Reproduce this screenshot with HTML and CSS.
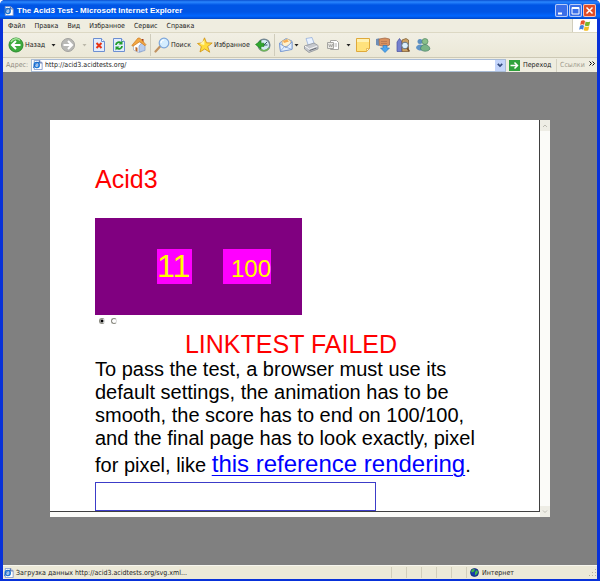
FILE: index.html
```html
<!DOCTYPE html>
<html lang="ru">

    <head>
        <meta charset="UTF-8">
        <meta name="viewport" content="width=device-width, initial-scale=1.0">
        <title>The Acid3 Test</title>

        <link rel="stylesheet" href="styles.css">
    </head>

    <body>
        <!-- shared icons -->
        <svg class="defs" aria-hidden="true">
            <symbol id="iePage" viewBox="0 0 12 12">
                <path d="M1.500.5h6.500l3 3v8h-9.500z" fill="#fff" stroke="#7b93c8" />
                <path d="M8 .5v3h3" fill="#dce6f8" stroke="#445a96" />
                <circle cx="4.500" cy="6" r="3" fill="none" stroke="#1d78d8" stroke-width="1.800" />
                <path d="M2 6h5M.5 9.500C1 6 5 2 8.500 2.500" fill="none" stroke="#1b62c4" stroke-width="1" />
            </symbol>
            <symbol id="down" viewBox="0 0 5 3">
                <path d="M.5 0h4l-2 2.500z" fill="currentColor" />
            </symbol>
        </svg>

        <div class="window">
            <header class="title-bar">
                <svg class="icon-small"><use href="#iePage" /></svg>
                <h1>The Acid3 Test - Microsoft Internet Explorer</h1>
                <div class="window-buttons">
                    <button type="button" aria-label="Minimize"><svg viewBox="0 0 13 13"><path d="M3 9.500h4" stroke="#fff" stroke-width="2" /></svg></button>
                    <button type="button" aria-label="Maximize"><svg viewBox="0 0 13 13"><path d="M3 3.500h7v6.500h-7zM3 4.500h7" fill="none" stroke="#fff" /></svg></button>
                    <button type="button" class="close" aria-label="Close"><svg viewBox="0 0 13 13"><path d="M3.500 3.500l6 6M9.500 3.500l-6 6" stroke="#fff" stroke-width="1.500" /></svg></button>
                </div>
            </header>

            <nav class="menu-bar">
                <button type="button">Файл</button>
                <button type="button">Правка</button>
                <button type="button">Вид</button>
                <button type="button">Избранное</button>
                <button type="button">Сервис</button>
                <button type="button">Справка</button>
                <div class="flag">
                    <svg viewBox="0 0 12 12">
                        <path d="M2 1.500c1.500-1 3-.8 4 0l-.8 4c-1-.8-2.500-1-4 0z" fill="#e8542c" />
                        <path d="M6.600 2c1.500.8 3 .8 4.600 0l-.9 4c-1.500.8-3 .8-4.500 0z" fill="#7ab52c" />
                        <path d="M1 6.200c1.500-1 3-.8 4 0l-.9 4c-1-.8-2.500-1-4 0z" fill="#3f7fe0" />
                        <path d="M5.600 6.700c1.500.8 3 .8 4.600 0l-.9 4c-1.500.8-3 .8-4.500 0z" fill="#f5bd22" />
                    </svg>
                </div>
            </nav>

            <div class="toolbar">
                <button type="button" class="back">
                    <svg class="icon" viewBox="0 0 16 16">
                        <circle cx="8" cy="8" r="7" fill="#3cab3c" stroke="#2b8b2d" />
                        <path d="M3 5c1-3 6-4.500 9-1.500" fill="none" stroke="#a6e59c" stroke-width="1.500" />
                        <path d="M12.500 8H4.500M8 4L4 8l4 4" fill="none" stroke="#fff" stroke-width="2" />
                    </svg>
                    <span>Назад</span>
                    <svg class="arrow"><use href="#down" /></svg>
                </button>
                <button type="button" class="forward" aria-label="Вперед" disabled>
                    <svg class="icon" viewBox="0 0 16 16">
                        <circle cx="8" cy="8" r="6.500" fill="#b9b9b6" stroke="#a2a29f" />
                        <path d="M3.500 8h8M8 4l4 4-4 4" fill="none" stroke="#fff" stroke-width="2" />
                    </svg>
                    <svg class="arrow"><use href="#down" /></svg>
                </button>
                <button type="button" aria-label="Остановить">
                    <svg class="icon" viewBox="0 0 16 16">
                        <path d="M2.500 1.500h8l3 3v10h-11z" fill="#e3edfd" stroke="#6c8fd2" />
                        <path d="M10.500 1.500v3h3" fill="#fff" stroke="#6c8fd2" />
                        <path d="M5.500 6l5 5M10.500 6l-5 5" stroke="#e83414" stroke-width="2" />
                    </svg>
                </button>
                <button type="button" aria-label="Обновить">
                    <svg class="icon" viewBox="0 0 16 16">
                        <path d="M2.500 1.500h8l3 3v10h-11z" fill="#e3edfd" stroke="#6c8fd2" />
                        <path d="M10.500 1.500v3h3" fill="#fff" stroke="#6c8fd2" />
                        <path d="M5 8c0-3 3.500-3.500 5-2M11 9c0 3-3.500 3.500-5 2" fill="none" stroke="#219c2a" stroke-width="1.800" />
                        <path d="M11.500 3.500v4h-4zM4.500 13.500v-4h4z" fill="#219c2a" />
                    </svg>
                </button>
                <button type="button" aria-label="Домой">
                    <svg class="icon" viewBox="0 0 16 16">
                        <path d="M10.500 2h2v4h-2z" fill="#a33f21" />
                        <path d="M2.500 8l3.500-4 5 2v8.500l-3.500 1-5-2.500z" fill="#fff" stroke="#9cabc6" stroke-width=".7" />
                        <path d="M8 9l3.500-4 2.500 3v5.500L8 15z" fill="#b8cdee" stroke="#7e9bcb" stroke-width=".7" />
                        <path d="M.8 8.500L7 1l2 .2 6 6.500-1 1-5.300-4L2 9.200z" fill="#f2a844" stroke="#cf7a21" stroke-width=".7" />
                        <path d="M4.500 10l2 .8v4l-2-1z" fill="#b96829" />
                    </svg>
                </button>
                <span class="separator"></span>
                <button type="button" class="search">
                    <svg class="icon" viewBox="0 0 16 16">
                        <path d="M1.500 14.500l5-5.500" stroke="#c19261" stroke-width="2.200" stroke-linecap="round" />
                        <circle cx="10" cy="6" r="4.800" fill="#d4edff" stroke="#7da6da" stroke-width="1.200" />
                        <path d="M7 6c0-2 1.500-3 3-3" fill="none" stroke="#fff" stroke-width="1.200" />
                    </svg>
                    <span>Поиск</span>
                </button>
                <button type="button" class="favorites">
                    <svg class="icon" viewBox="0 0 16 16">
                        <path d="M7.500.8l2 5 5.700.2-4.500 3.500 2 5.700-5-3.200L3 15l1.300-5.500L.5 6.500l5-.7z" fill="#ffdc3c" stroke="#cf9014" stroke-width=".8" />
                        <path d="M7.300 3v5L3 7z" fill="#fff6ae" />
                    </svg>
                    <span>Избранное</span>
                </button>
                <button type="button" aria-label="Журнал">
                    <svg class="icon" viewBox="0 0 16 16">
                        <circle cx="9" cy="8" r="5.800" fill="#d4ecf2" stroke="#748894" stroke-width="1.500" />
                        <path d="M9 8l3-3M9 8h3.500" stroke="#34576b" />
                        <path d="M14 11c-3 4-8.500 3.500-9.500-1" fill="none" stroke="#70b45a" stroke-width="1.500" />
                        <path d="M.5 7.500L6 3.500v2.700h3v3.200H6V12z" fill="#30a72e" stroke="#1e7c20" stroke-width=".6" />
                    </svg>
                </button>
                <span class="separator"></span>
                <button type="button" class="mail" aria-label="Почта">
                    <svg class="icon" viewBox="0 0 16 16">
                        <path d="M1.500 6L8 1.500 14 4v8L2.500 14.500z" fill="#c2dcfa" stroke="#7496ce" stroke-width=".8" />
                        <path d="M4 4l6-2 3 2.500-1 4-7 1.500z" fill="#fff2cf" stroke="#daa65a" stroke-width=".6" />
                        <path d="M5 4l4-1.500 2 2L6 6z" fill="#f6ae55" />
                        <path d="M1.500 6.500l6.500 4L14 5v7.500L2.500 14.500z" fill="#e3f0ff" stroke="#6e92ce" stroke-width=".8" />
                        <path d="M2.500 14l4-4.500 7.500 3" fill="none" stroke="#7f9fd5" stroke-width=".7" />
                    </svg>
                    <svg class="arrow"><use href="#down" /></svg>
                </button>
                <button type="button" aria-label="Печать">
                    <svg class="icon" viewBox="0 0 16 16">
                        <path d="M3 1.500l6-1 2.500 7-6 1.500z" fill="#eaf3ff" stroke="#8ba8d8" stroke-width=".7" />
                        <path d="M1.500 9l9.500-3 4 2.500v3.500L6 15.500 1.500 12z" fill="#c5c8cd" stroke="#84888f" stroke-width=".7" />
                        <path d="M2 9.200l4.500 2.800 8-3" fill="none" stroke="#f6f6f6" />
                        <path d="M6.500 13.500l7-2.500" stroke="#63676e" />
                    </svg>
                </button>
                <button type="button" class="word" aria-label="Правка в Word">
                    <svg class="icon" viewBox="0 0 16 16">
                        <path d="M5.500 3.500h6l2 2v7h-8z" fill="#fff" stroke="#a6a6a2" />
                        <path d="M2.500 5.500h6v6h-6z" fill="#ecebe6" stroke="#a6a6a2" />
                        <path d="M3.700 7l1 3 1-2.500 1 2.500 1-3M9.500 7h2.500M9.500 9h2.500" fill="none" stroke="#9b9b98" stroke-width=".8" />
                    </svg>
                    <svg class="arrow"><use href="#down" /></svg>
                </button>
                <button type="button" aria-label="Заметки">
                    <svg class="icon" viewBox="0 0 16 16">
                        <path d="M1.500 1.500h13v10l-3 3h-10z" fill="#ffe27c" stroke="#dfa93a" />
                        <path d="M2 2h12v3H2z" fill="#fff2b4" />
                        <path d="M14.500 11.500h-3v3z" fill="#fff7d4" stroke="#dfa93a" stroke-width=".7" />
                    </svg>
                </button>
                <button type="button" aria-label="Загрузить">
                    <svg class="icon" viewBox="0 0 16 16">
                        <path d="M1 2l3-.8V9L1 8z" fill="#6e8fb8" />
                        <path d="M4 2l6-1 4.500 1v6L11 9.500 4.500 8.500z" fill="#d9925f" stroke="#9b6040" stroke-width=".7" />
                        <path d="M6 4.500h6M6 6.500h6" stroke="#a86b49" stroke-width=".6" />
                        <path d="M8 8.500h4v2.500h2.500L10 15.500 5.500 11H8z" fill="#4ca4ed" stroke="#2572be" stroke-width=".6" />
                    </svg>
                </button>
                <button type="button" aria-label="Справочные материалы">
                    <svg class="icon" viewBox="0 0 16 16">
                        <path d="M2 5l2.500-3.500L7 5v9.500H2z" fill="#7581cf" stroke="#474f9e" stroke-width=".7" />
                        <path d="M7 3l4-1.500 2.500 1.500v11.500H7z" fill="#cda263" stroke="#76552e" stroke-width=".7" />
                        <circle cx="10" cy="8.500" r="3.300" fill="#dbeffc" stroke="#64788a" />
                        <path d="M12 11l2.500 3.500" stroke="#77512f" stroke-width="1.500" />
                    </svg>
                </button>
                <button type="button" aria-label="Messenger">
                    <svg class="icon" viewBox="0 0 16 16">
                        <circle cx="5" cy="4.500" r="2.500" fill="#5d8fc0" />
                        <path d="M1 11c0-4 7-5 8-1l-1 3c-2 1-5 1-7-2z" fill="#5e93c7" />
                        <circle cx="10" cy="4.500" r="3" fill="#8abf8a" stroke="#487e59" stroke-width=".6" />
                        <path d="M5.500 12c0-6 8.500-6 9.500 0-2 3-7.500 3-9.500 0z" fill="#79b486" stroke="#3e7660" stroke-width=".6" />
                    </svg>
                </button>
            </div>

            <form class="address-bar">
                <label for="address">Адрес:</label>
                <div class="address-field">
                    <svg class="icon-small"><use href="#iePage" /></svg>
                    <input type="text" id="address" name="address" value="http://acid3.acidtests.org/">
                    <button type="button" class="drop" aria-label="Список адресов">
                        <svg viewBox="0 0 9 9"><path d="M2.500 3.500l2 2 2-2" fill="none" stroke="#32497c" stroke-width="1.500" /></svg>
                    </button>
                </div>
                <button type="button" class="go">
                    <svg viewBox="0 0 11 11">
                        <path d="M0 0h11v11H0z" fill="#30a23d" />
                        <path d="M1.500 5.500h7M5.500 2.500l3 3-3 3" fill="none" stroke="#fff" stroke-width="1.500" />
                    </svg>
                    <span>Переход</span>
                </button>
                <button type="button" class="links">Ссылки</button>
                <svg class="chevrons" viewBox="0 0 6 5"><path d="M.5.5l2 2-2 2M3.500.5l2 2-2 2" fill="none" stroke="#000" /></svg>
            </form>

            <main class="viewport">
                <div class="frame">
                    <article class="page">
                        <h2>Acid3</h2>
                        <div class="score">
                            <span class="result">11</span>
                            <span class="total">100</span>
                        </div>
                        <div class="radios">
                            <input type="radio" name="bucket" aria-label="1" checked>
                            <input type="radio" name="bucket" aria-label="2">
                        </div>
                        <p class="linktest">LINKTEST FAILED</p>
                        <p class="instructions">To pass the test, a browser must use its default settings, the animation has to be smooth, the score has to end on 100/100, and the final page has to look exactly, pixel for pixel, like <a href="#">this reference rendering</a>.</p>
                        <div class="box"></div>
                    </article>
                    <div class="scrollbar">
                        <svg viewBox="0 0 10 11"><path d="M0 0h10v11H0z" fill="#eeede5" /><path d="M3 7l2-2 2 2" fill="none" stroke="#bdbcb3" /></svg>
                        <svg viewBox="0 0 10 11"><path d="M0 0h10v11H0z" fill="#eeede5" /><path d="M3 4.500l2 2 2-2" fill="none" stroke="#bdbcb3" /></svg>
                    </div>
                </div>
            </main>

            <footer class="status-bar">
                <svg class="icon-small"><use href="#iePage" /></svg>
                <span class="message">Загрузка данных http://acid3.acidtests.org/svg.xml...</span>
                <span class="panel"></span>
                <span class="panel"></span>
                <span class="panel"></span>
                <span class="panel"></span>
                <span class="panel"></span>
                <div class="zone">
                    <svg viewBox="0 0 9 9">
                        <circle cx="4.500" cy="4.500" r="4" fill="#173caa" stroke="#0c2266" stroke-width=".7" />
                        <path d="M1 3l2-2 2 .5-1 2-2 1zM5 4l2-2 1 2-1 2-2 1.500z" fill="#45b944" />
                    </svg>
                    <span>Интернет</span>
                </div>
                <svg class="grip" viewBox="0 0 9 9"><path d="M7 1h1v1H7zM7 4h1v1H7zM4 4h1v1H4zM7 7h1v1H7zM4 7h1v1H4zM1 7h1v1H1z" fill="#b5b19e" /></svg>
            </footer>
        </div>
    </body>

</html>
```

FILE: styles.css
```css
* {
    box-sizing: border-box;
}

body {
    margin: 0;
    background-color: #fff;
    font-family: "DejaVu Sans Condensed", "DejaVu Sans", sans-serif;
    font-size: 7px;
    line-height: 10px;
    color: #222;
}

svg {
    display: block;
    flex: none;
}

button {
    display: flex;
    align-items: center;
    padding: 0;
    border: none;
    background: none;
    font: inherit;
    color: inherit;
    white-space: nowrap;
}

.defs {
    display: none;
}

.window {
    display: flex;
    flex-direction: column;
    min-height: 100vh;
    padding: 0 3px 3px;
    background-color: #0831d9;
    border-radius: 5px 5px 0 0;
    overflow: hidden;
}

.icon-small {
    width: 10px;
    height: 10px;
}

.icon {
    width: 16px;
    height: 16px;
}

.arrow {
    width: 5px;
    height: 3px;
    margin-left: auto;
}

/* title */
.title-bar {
    display: flex;
    align-items: center;
    gap: 3px;
    height: 19px;
    margin: 0 -3px;
    padding: 2px 4px 0;
    background: linear-gradient(#0a4fd0, #2a87ff 2px, #0055e5 5px, #0055e5 12px, #0066ff 16px, #0046c8);
}

.title-bar h1 {
    flex: 1;
    margin: 0;
    font-family: "Liberation Sans", Arial, sans-serif;
    font-size: 8px;
    font-weight: bold;
    color: #fff;
    white-space: nowrap;
}

.window-buttons {
    display: flex;
    gap: 1px;
}

.window-buttons button {
    width: 13px;
    height: 13px;
    border-radius: 2px;
    background-color: #3a6ee8;
    box-shadow: inset 0 0 0 1px #b9cdf8;
}

.window-buttons svg {
    width: 13px;
    height: 13px;
}

.window-buttons .close {
    background-color: #e04d28;
    box-shadow: inset 0 0 0 1px #f3c6bc;
}

/* menu */
.menu-bar {
    display: flex;
    align-items: center;
    gap: 9px;
    height: 14px;
    padding-left: 5px;
    background-color: #efede0;
    border-bottom: 1px solid #dcd8c4;
}

.flag {
    align-self: stretch;
    margin-left: auto;
    padding: 0 6px;
    background-color: #fff;
    border-left: 1px solid #d0cdbd;
}

.flag svg {
    width: 12px;
    height: 13px;
}

/* toolbar */
.toolbar {
    display: flex;
    align-items: center;
    gap: 4px;
    height: 25px;
    padding-left: 5px;
    background: linear-gradient(#f1efe4, #ebe8d7);
    border-bottom: 1px solid #cdc9b5;
}

.toolbar button {
    gap: 1px;
    height: 20px;
}

.toolbar .back {
    width: 48px;
}

.toolbar .forward {
    width: 27px;
    color: #bbb8aa;
}

.toolbar .search {
    width: 39px;
}

.toolbar .favorites {
    width: 54px;
}

.toolbar .mail {
    width: 21px;
    gap: 0;
}

.toolbar .word {
    width: 28px;
    padding-left: 2px;
}

.separator {
    width: 1px;
    height: 22px;
    margin: 0 -1px;
    background-color: #cfccbb;
}

/* address */
.address-bar {
    display: flex;
    align-items: center;
    height: 14px;
    padding: 0 2px 0 3px;
    background-color: #efede0;
}

.address-bar label {
    width: 25px;
    color: #8f8c80;
}

.address-field {
    display: flex;
    flex: 1;
    align-items: center;
    height: 13px;
    padding-left: 1px;
    background-color: #fff;
    border: 1px solid #a9bcd6;
}

.address-field input {
    flex: 1;
    min-width: 0;
    height: 10px;
    padding: 0 0 0 2px;
    border: none;
    outline: none;
    background: none;
    font: inherit;
    color: inherit;
}

.drop {
    width: 10px;
    height: 11px;
    background-color: #c4d5fb;
}

.drop svg {
    width: 10px;
    height: 10px;
}

.go {
    gap: 3px;
    width: 50px;
    padding-left: 3px;
}

.go svg {
    width: 11px;
    height: 11px;
}

.address-bar .links {
    width: 30px;
    height: 13px;
    padding-left: 3px;
    border-left: 1px solid #d5d2c2;
    color: #9d9a8c;
}

.chevrons {
    width: 6px;
    height: 5px;
    margin: 0 0 3px 3px;
}

/* document area */
.viewport {
    display: flex;
    flex: 1;
    padding: 48px 47px;
    background-color: #808080;
}

.frame {
    display: flex;
    flex: 1;
    background-color: #fbfbf8;
}

.page {
    flex: 1;
    margin-bottom: 5px;
    padding: 45px 52px 0 45px;
    background-color: #fff;
    border-right: 1px solid #404040;
    border-bottom: 1px solid #404040;
    font-family: "Liberation Sans", Arial, sans-serif;
    font-size: 20px;
    line-height: 23px;
    color: #000;
}

.page h2 {
    margin: 0 0 25px;
    font-size: 25px;
    font-weight: normal;
    line-height: 28px;
    color: #f00;
}

.score {
    display: flex;
    gap: 31px;
    width: 207px;
    height: 97px;
    padding: 31px 0 0 62px;
    background-color: #800080;
    color: #ff0;
}

.score span {
    height: 35px;
    background-color: #f0f;
    line-height: 35px;
}

.result {
    width: 35px;
    font-size: 32px;
}

.total {
    padding: 2px 0 0 8px;
    font-size: 24px;
}

.radios {
    display: flex;
    gap: 6px;
    height: 15px;
    padding: 3px 0 0 4px;
}

.radios input {
    appearance: none;
    width: 6px;
    height: 6px;
    margin: 0;
    border: 1px solid #8a8a80;
    border-right-color: #ddd;
    border-radius: 50%;
}

.radios input:checked {
    background: radial-gradient(#000 1px, #fff 2px);
}

.linktest {
    margin: 0;
    font-size: 25px;
    line-height: 28px;
    text-align: center;
    color: #f00;
}

.instructions {
    margin: 0;
}

.instructions a {
    color: #00f;
    font-size: 24px;
    line-height: 28px;
    text-decoration: underline;
    text-decoration-thickness: 1px;
    text-underline-offset: 3px;
}

.box {
    width: 281px;
    height: 29px;
    margin-top: 4px;
    border: 1px solid #3c3cc8;
}

.scrollbar {
    display: flex;
    flex-direction: column;
    justify-content: space-between;
    width: 10px;
}

.scrollbar svg {
    width: 10px;
    height: 11px;
}

/* status */
.status-bar {
    display: flex;
    align-items: center;
    height: 14px;
    padding-left: 1px;
    background-color: #ece9d8;
    border-top: 1px solid #f7f6ee;
}

.message {
    flex: 1;
    padding-left: 2px;
    white-space: nowrap;
}

.panel {
    width: 15px;
    height: 11px;
    border-left: 1px solid #d2cebb;
}

.zone {
    display: flex;
    align-items: center;
    gap: 3px;
    width: 122px;
    height: 11px;
    padding-left: 3px;
    border-left: 1px solid #d2cebb;
}

.zone svg {
    width: 9px;
    height: 9px;
}

.grip {
    width: 9px;
    height: 9px;
}
```
